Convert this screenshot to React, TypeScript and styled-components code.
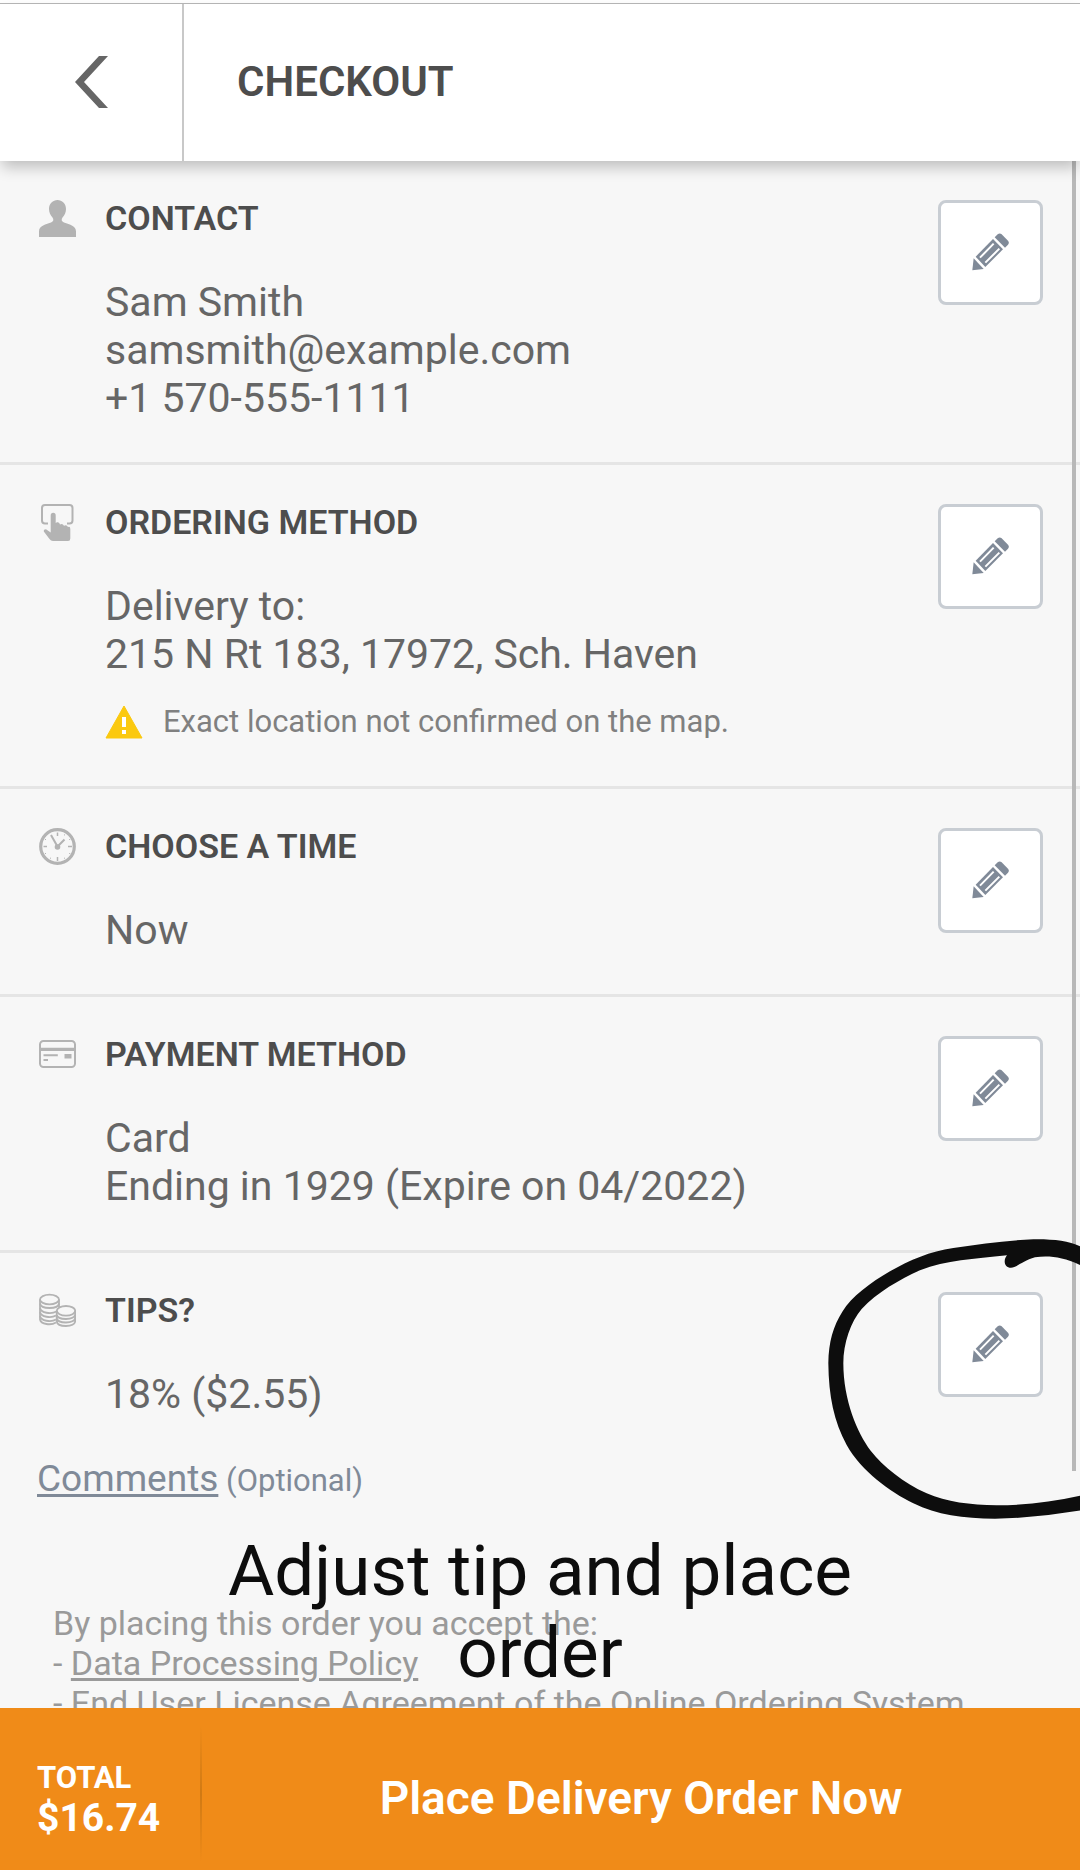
import React from "react";
import styled, { createGlobalStyle } from "styled-components";

const GlobalStyle = createGlobalStyle`
  * {
    box-sizing: border-box;
  }

  body {
    margin: 0;
    background: #ffffff;
    color: #666666;
    font-family: Roboto, "Liberation Sans", sans-serif;
  }

  button {
    font-family: inherit;
    cursor: pointer;
  }
`;

const Page = styled.div`
  display: flex;
  flex-direction: column;
  height: 100vh;
  overflow: hidden;
`;

const Header = styled.header`
  display: flex;
  align-items: stretch;
  flex: none;
  height: 158px;
  margin-top: 3px;
  border-top: 1px solid #b4b4b4;
  background: #ffffff;
  box-shadow: 0 8px 14px -2px rgba(0, 0, 0, 0.24);
  position: relative;
  z-index: 1;
`;

const BackButton = styled.button`
  display: flex;
  align-items: center;
  justify-content: center;
  width: 184px;
  padding: 0 0 2px;
  border: 0;
  border-right: 2px solid #c8c8c8;
  background: none;
`;

const PageTitle = styled.h1`
  display: flex;
  align-items: center;
  margin: 0;
  padding: 0 0 2px 53px;
  color: #4d4d4d;
  font-size: 42px;
  font-weight: 600;
`;

const Content = styled.main`
  flex: 1;
  min-height: 0;
  overflow: hidden;
  position: relative;
  background: #f7f7f7;
`;

const Section = styled.section<{ $last?: boolean }>`
  display: grid;
  grid-template-columns: 38px 1fr 105px;
  column-gap: 29px;
  align-items: start;
  position: relative;
  padding: 39px 37px ${(p) => (p.$last ? 0 : 40)}px 38px;
  border-bottom: ${(p) => (p.$last ? "0" : "3px solid #e5e5e5")};
`;

const SectionTitle = styled.h2`
  margin: 0 0 42px;
  color: #4d4d4d;
  font-size: 34px;
  font-weight: 600;
  line-height: 36px;
`;

const Detail = styled.p`
  margin: 0;
  font-size: 41px;
  line-height: 48px;
`;

const Warning = styled.p`
  display: flex;
  align-items: center;
  gap: 20px;
  margin: 20px 0 0;
  color: #808080;
  font-size: 31px;
  line-height: 48px;
`;

const EditButton = styled.button`
  display: flex;
  align-items: center;
  justify-content: center;
  width: 105px;
  height: 105px;
  padding: 0 1px 1px 0;
  border: 3px solid #c8cdd3;
  border-radius: 8px;
  background: #ffffff;
`;

const Comments = styled.div`
  padding: 39px 37px 0;
  color: #808a98;
  font-size: 31px;
  line-height: 44px;
`;

const CommentsLink = styled.a`
  color: inherit;
  font-size: 37px;
  text-decoration: underline;
  text-decoration-skip-ink: none;
  text-decoration-thickness: 3px;
  text-underline-offset: 3px;
`;

const Legal = styled.div`
  padding: 100px 53px 0;
  color: #9a9a9a;
  font-size: 34px;
  line-height: 40px;
`;

const LegalLink = styled.a`
  color: inherit;
  text-decoration: underline;
  text-decoration-thickness: 3px;
  text-underline-offset: 3px;
`;

const LegalList = styled.ul`
  margin: 0;
  padding: 0;
  list-style: none;
`;

const ScrollThumb = styled.div`
  position: absolute;
  top: 0;
  right: 4px;
  width: 4px;
  height: 84.7%;
  background: #b8b8b8;
`;

const Circle = styled.svg`
  position: absolute;
  top: -53px;
  right: 0;
  z-index: 1;
  pointer-events: none;
`;

const Annotation = styled.p`
  position: absolute;
  right: 0;
  bottom: 14px;
  left: 0;
  max-width: 700px;
  margin: 0 auto;
  color: #0d0d0d;
  font-size: 71px;
  line-height: 82px;
  text-align: center;
  pointer-events: none;
`;

const Footer = styled.footer`
  display: flex;
  align-items: stretch;
  flex: none;
  height: 162px;
  background: #f08b18;
  color: #ffffff;
`;

const Total = styled.div`
  display: flex;
  flex-direction: column;
  justify-content: center;
  width: 200px;
  padding: 20px 0 0 37px;
  font-weight: 700;
`;

const TotalLabel = styled.span`
  font-size: 31px;
  line-height: 38px;
`;

const TotalAmount = styled.span`
  font-size: 39px;
  line-height: 42px;
`;

const Divider = styled.div`
  width: 2px;
  margin: 18px 0 8px;
  background: linear-gradient(rgba(190, 104, 8, 0), #d07a14 50%, rgba(190, 104, 8, 0));
`;

const PlaceOrder = styled.button`
  flex: 1;
  padding: 18px 0 0;
  border: 0;
  background: none;
  color: inherit;
  font-size: 46px;
  font-weight: 600;
`;

const GREY = "#b3b3b3";

const BackIcon = () => (
  <svg width="34" height="54" viewBox="0 0 34 54" aria-hidden="true">
    <path d="M34 1H25L1 27L25 53H34L10 27Z" fill="#666666" />
  </svg>
);

const PencilIcon = () => (
  <svg width="38" height="38" viewBox="0 0 114 114" aria-hidden="true">
    <g fill="#808a98">
      <path d="M4 112L8 76L38 108Z" />
      <path d="M14 71L66 18L96 49L43 102Z" />
      <path d="M71 13L80 4Q86 -1 92 4L111 23Q116 29 111 35L102 44Z" />
    </g>
    <path d="M27 74L68 32M43 89L85 47" stroke="#ffffff" strokeWidth="6" />
  </svg>
);

const PersonIcon = () => (
  <svg width="38" height="38" viewBox="0 0 38 38" aria-hidden="true">
    <path
      d="M19.500 0C24 0 28 3.500 28 9C28 12.500 26.500 15.500 24.500 17.500C23 19.500 23.500 21.500 26 22.500C32 24.500 38 26 38 31.500V37H1V31.500C1 26 7 24.500 13 22.500C15.500 21.500 16 19.500 14.500 17.500C12.500 15.500 11 12.500 11 9C11 3.500 15 0 19.500 0Z"
      fill={GREY}
    />
  </svg>
);

const TouchIcon = () => (
  <svg width="38" height="38" viewBox="0 0 38 38" aria-hidden="true">
    <path
      d="M10 19.500H7Q4 19.500 4 16.500V4Q4 1 7 1H31.500Q34.500 1 34.500 4V16.500Q34.500 19.500 31.500 19.500H29"
      fill="none"
      stroke={GREY}
      strokeWidth="2"
    />
    <path
      d="M12.700 11.500Q12.700 8.800 15.200 8.800T17.700 11.500V19Q18.500 18 20 18.300T22 20.500Q24.500 18.800 26 21.800Q28.500 20 30 23Q32.300 22 32.300 25V34.500Q32.300 37 30 37H15Q12.800 37 11.500 35L5.800 27.500Q5.500 25.200 8 25.200L12.700 28.500Z"
      fill={GREY}
    />
  </svg>
);

const ClockIcon = () => (
  <svg width="38" height="38" viewBox="0 1 38 38" aria-hidden="true">
    <g fill="none" stroke={GREY}>
      <circle cx="19.500" cy="19.500" r="16.800" strokeWidth="3.200" />
      <path d="M19.500 5.500V9M19.500 30V34M5.500 19.500H9M30 19.500H34" strokeWidth="1.500" />
      <path
        d="M26.500 7.400V8.400M31.200 12.500H32.200M31.200 26.500H32.200M26.500 30.700V31.700M12.500 30.700V31.700M7 26.500H8M7 12.500H8"
        strokeWidth="1"
      />
      <path d="M13 8L19.500 19.500L26.500 12.500" strokeWidth="2" />
    </g>
    <circle cx="19.500" cy="20" r="2.800" fill={GREY} />
  </svg>
);

const CardIcon = () => (
  <svg width="38" height="38" viewBox="0 1 38 38" aria-hidden="true">
    <rect x="2" y="6" width="35" height="26" rx="3.500" fill="none" stroke={GREY} strokeWidth="2" />
    <path d="M2 12.800H37V16H2ZM5.500 19.300H19.800V21.200H5.500ZM5.500 24H10V26H5.500ZM26.500 19H33.500V23.500H26.500Z" fill={GREY} />
  </svg>
);

const CoinsIcon = () => (
  <svg width="38" height="38" viewBox="0 0 38 38" aria-hidden="true">
    <g fill="none" stroke={GREY} strokeWidth="1.800">
      <ellipse cx="11.500" cy="7.500" rx="9.500" ry="4.800" />
      <path d="M2 7.500V27.500C3 32.500 13 33.500 18 30.500M21 7.500V15" />
      <path d="M2 11.500C3 17.500 20 17.500 21 11.500M2 16C3 21 13 22.500 18.500 19.500M2 20C3 25 13 26.500 18 23.500M2 24C3 29 13 30.500 18 27.500" />
      <ellipse cx="28" cy="18.800" rx="9.200" ry="4.800" />
      <path d="M18.700 18.800V29.500C19.700 35.500 36.200 35.500 37.200 29.500V18.800M18.700 22.500C19.700 28.500 36.200 28.500 37.200 22.500M18.700 26C19.700 32 36.200 32 37.200 26" />
    </g>
  </svg>
);

const WarningIcon = () => (
  <svg width="38" height="34" viewBox="0 0 38 34" aria-hidden="true">
    <path d="M19 1L37 33H1Z" fill="#fbc90f" stroke="#fbc90f" strokeWidth="1" strokeLinejoin="round" />
    <path d="M17 12H21V22H17ZM17 25H21V29H17Z" fill="#ffffff" />
  </svg>
);

const HandDrawnCircle = () => (
  <Circle width="300" height="360" viewBox="0 0 900 1080" aria-hidden="true">
    <path
      d="M905 141C870 123 820 117 760 118C680 121 600 132 520 144C450 154 390 180 330 214C270 249 215 290 187 335C160 378 146 425 145 490C146 590 162 665 200 735C245 815 330 875 400 910C470 945 550 956 645 956C740 955 820 944 905 931V886C820 904 740 916 650 916C570 915 500 906 440 880C370 848 310 800 272 752C232 700 190 600 190 490C190 430 212 365 245 327C290 278 360 238 420 211C500 180 580 177 681 166C668 182 674 203 693 203C710 203 730 181 765 172C810 166 850 172 905 197Z"
      fill="#0d0d0d"
    />
  </Circle>
);

type SectionData = {
  title: string;
  icon: React.ReactNode;
  lines: string[];
  warning?: string;
};

const SECTIONS: SectionData[] = [
  {
    title: "CONTACT",
    icon: <PersonIcon />,
    lines: ["Sam Smith", "samsmith@example.com", "+1 570-555-1111"],
  },
  {
    title: "ORDERING METHOD",
    icon: <TouchIcon />,
    lines: ["Delivery to:", "215 N Rt 183, 17972, Sch. Haven"],
    warning: "Exact location not confirmed on the map.",
  },
  { title: "CHOOSE A TIME", icon: <ClockIcon />, lines: ["Now"] },
  {
    title: "PAYMENT METHOD",
    icon: <CardIcon />,
    lines: ["Card", "Ending in 1929 (Expire on 04/2022)"],
  },
  { title: "TIPS?", icon: <CoinsIcon />, lines: ["18% ($2.55)"] },
];

export default function App() {
  return (
    <Page>
      <GlobalStyle />
      <Header>
        <BackButton type="button" aria-label="Back">
          <BackIcon />
        </BackButton>
        <PageTitle>CHECKOUT</PageTitle>
      </Header>

      <Content>
        {SECTIONS.map((section, index) => {
          const last = index === SECTIONS.length - 1;
          return (
            <Section key={section.title} $last={last}>
              {section.icon}
              <div>
                <SectionTitle>{section.title}</SectionTitle>
                {section.lines.map((line) => (
                  <Detail key={line}>{line}</Detail>
                ))}
                {section.warning && (
                  <Warning>
                    <WarningIcon />
                    {section.warning}
                  </Warning>
                )}
              </div>
              <EditButton type="button" aria-label={`Edit ${section.title}`}>
                <PencilIcon />
              </EditButton>
              {last && <HandDrawnCircle />}
            </Section>
          );
        })}

        <Comments>
          <CommentsLink href="#comments">Comments</CommentsLink> (Optional)
        </Comments>

        <Legal>
          By placing this order you accept the:
          <LegalList>
            <li>
              - <LegalLink href="#data-policy">Data Processing Policy</LegalLink>
            </li>
            <li>
              - <LegalLink href="#license">End User License Agreement of the Online Ordering System</LegalLink>
            </li>
          </LegalList>
        </Legal>

        <ScrollThumb />
        <Annotation>Adjust tip and place order</Annotation>
      </Content>

      <Footer>
        <Total>
          <TotalLabel>TOTAL</TotalLabel>
          <TotalAmount>$16.74</TotalAmount>
        </Total>
        <Divider />
        <PlaceOrder type="button">Place Delivery Order Now</PlaceOrder>
      </Footer>
    </Page>
  );
}
